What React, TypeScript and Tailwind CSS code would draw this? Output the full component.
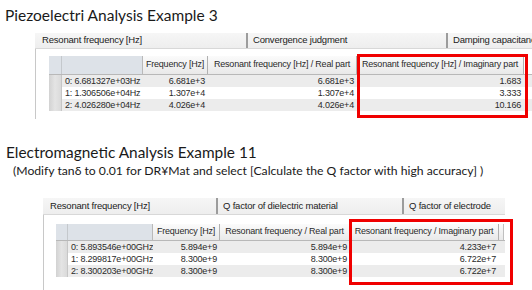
import React from "react";

type Col = { w: string; align: "l" | "r" };

function Grid({
  cols,
  heads,
  rows,
  headH,
  box,
  tail,
}: {
  cols: Col[];
  heads: string[];
  rows: string[][];
  headH: string;
  box: string;
  tail?: boolean;
}) {
  return (
    <div className="relative flex flex-col font-['Liberation_Sans',Arial,sans-serif] text-[9px] tracking-[-0.2px] text-[#2a2a2a]">
      <div className={`flex ${headH} border-b border-[#b8b8b8]`}>
        <div className={`${cols[0].w} shrink-0 bg-[#dde2e8] border-r border-[#c4c8cc]`} />
        <div className={`${cols[1].w} shrink-0 bg-[#dde2e8] border-r border-[#b9b9b9]`} />
        {heads.map((h, i) => (
          <div
            key={i}
            className={`${cols[i + 2].w} shrink-0 flex items-center justify-center whitespace-nowrap overflow-hidden bg-gradient-to-b from-[#fbfbfb] to-[#e9e9e9] border-r border-[#b0b0b0]`}
          >
            {h}
          </div>
        ))}
        {tail ? <div className="w-[5px] shrink-0 bg-gradient-to-b from-[#fbfbfb] to-[#e9e9e9] border-r border-[#c0c0c0]" /> : null}
      </div>
      {rows.map((r, ri) => (
        <div key={ri} className={`flex h-[12px] leading-[12px] ${ri % 2 === 1 ? "bg-white" : "bg-[#ececec]"}`}>
          <div className={`${cols[0].w} shrink-0 bg-gradient-to-r from-[#d2d2d2] via-[#e4e4e4] to-[#dadada] border-r border-[#c6c6c6]`} />
          {r.map((c, ci) => (
            <div
              key={ci}
              className={`${cols[ci + 1].w} shrink-0 whitespace-nowrap overflow-hidden ${
                cols[ci + 1].align === "r" ? "text-right pr-[3px]" : "text-left pl-[3px]"
              }`}
            >
              {c}
            </div>
          ))}
        </div>
      ))}
      <div className={`absolute ${box} border-[3px] border-[#f00000] pointer-events-none`} />
    </div>
  );
}

function Tab({ w, label, first }: { w: string; label: string; first?: boolean }) {
  return (
    <div className={`${w} shrink-0 flex items-center h-full whitespace-nowrap overflow-hidden ${first ? "pl-[7px]" : "pl-[5px] border-l-2 border-[#9c9c9c]"}`}>
      {label}
    </div>
  );
}

export default function App() {
  const colsTop: Col[] = [
    { w: "w-[13px]", align: "l" },
    { w: "w-[81px]", align: "l" },
    { w: "w-[65px]", align: "r" },
    { w: "w-[149px]", align: "r" },
    { w: "w-[167px]", align: "r" },
  ];
  const colsBot: Col[] = [
    { w: "w-[12px]", align: "l" },
    { w: "w-[85px]", align: "l" },
    { w: "w-[67px]", align: "r" },
    { w: "w-[130px]", align: "r" },
    { w: "w-[149px]", align: "r" },
  ];
  return (
    <div className="w-[532px] h-[290px] overflow-hidden bg-white flex flex-col text-[#111]">
      <div className="h-[33px] shrink-0 pl-[5px] pt-[7px] font-['Lato',sans-serif] text-[15.5px] leading-[16px] text-[#1a1a1a] whitespace-nowrap">
        Piezoelectri Analysis Example 3
      </div>
      <div className="ml-[35px] h-[86px] shrink-0 flex flex-col">
        <div className="h-[16px] shrink-0 flex bg-gradient-to-b from-[#f6f6f6] to-[#eeeeee] border-b border-[#d8d8d8] font-['Liberation_Sans',Arial,sans-serif] text-[9.5px] tracking-[-0.2px] text-[#222]">
          <Tab w="w-[211px]" label="Resonant frequency [Hz]" first />
          <Tab w="w-[200px]" label="Convergence judgment" />
          <Tab w="w-[120px]" label="Damping capacitance" />
        </div>
        <div className="flex-1 border-l border-[#c8c8c8] pl-[13px] pt-[7px]">
          <Grid
            cols={colsTop}
            headH="h-[19px]"
            heads={["Frequency [Hz]", "Resonant frequency [Hz] / Real part", "Resonant frequency [Hz] / Imaginary part"]}
            rows={[
              ["0: 6.681327e+03Hz", "6.681e+3", "6.681e+3", "1.683"],
              ["1: 1.306506e+04Hz", "1.307e+4", "1.307e+4", "3.333"],
              ["2: 4.026280e+04Hz", "4.026e+4", "4.026e+4", "10.166"],
            ]}
            box="left-[308px] top-[-2px] w-[171px] h-[64px]"
          />
        </div>
      </div>
      <div className="mt-[25px] shrink-0 pl-[6px] font-['Lato',sans-serif] text-[15.4px] leading-[16px] text-[#1a1a1a] whitespace-nowrap">
        Electromagnetic Analysis Example 11
      </div>
      <div className="mt-[3px] shrink-0 pl-[13px] font-['Lato',sans-serif] text-[12.2px] leading-[16px] text-[#1a1a1a] whitespace-nowrap">
        (Modify tanδ to 0.01 for DR¥Mat and select [Calculate the Q factor with high accuracy] )
      </div>
      <div className="mt-[19px] ml-[43px] w-[462px] flex-1 flex flex-col">
        <div className="h-[17px] shrink-0 flex bg-gradient-to-b from-[#f6f6f6] to-[#eeeeee] border-b border-[#d8d8d8] font-['Liberation_Sans',Arial,sans-serif] text-[9.5px] tracking-[-0.2px] text-[#222]">
          <Tab w="w-[173px]" label="Resonant frequency [Hz]" first />
          <Tab w="w-[186px]" label="Q factor of dielectric material" />
          <Tab w="w-[103px]" label="Q factor of electrode" />
        </div>
        <div className="flex-1 border-l border-[#c8c8c8] pl-[12px] pt-[9px]">
          <Grid
            cols={colsBot}
            headH="h-[17px]"
            heads={["Frequency [Hz]", "Resonant frequency / Real part", "Resonant frequency / Imaginary part"]}
            rows={[
              ["0: 5.893546e+00GHz", "5.894e+9", "5.894e+9", "4.233e+7"],
              ["1: 8.299817e+00GHz", "8.300e+9", "8.300e+9", "6.722e+7"],
              ["2: 8.300203e+00GHz", "8.300e+9", "8.300e+9", "6.722e+7"],
            ]}
            box="left-[293px] top-[-5px] w-[164px] h-[66px]"
            tail
          />
        </div>
      </div>
    </div>
  );
}
